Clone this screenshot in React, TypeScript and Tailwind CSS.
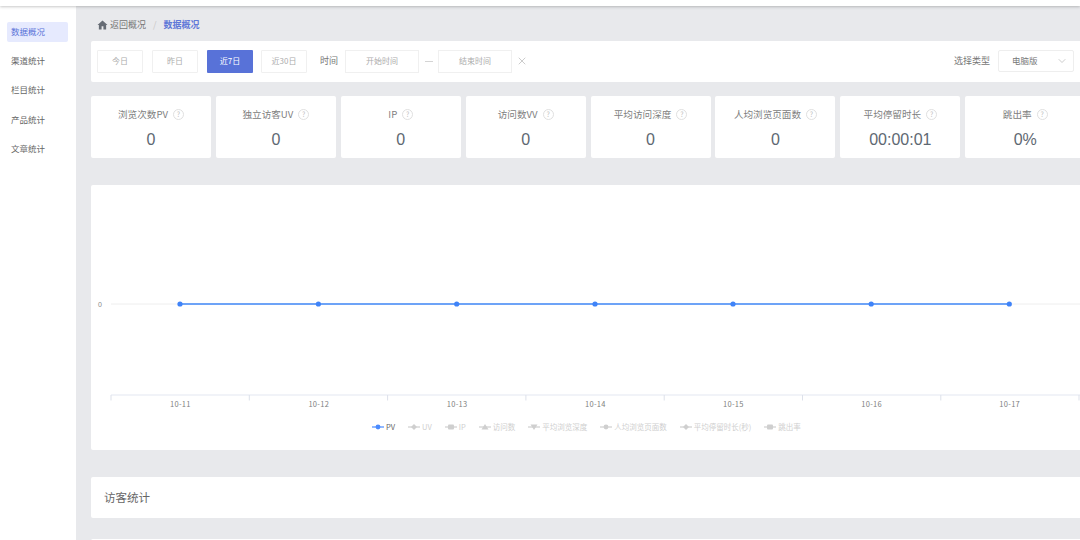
import React from "react";
import { ChevronDown, X } from "lucide-react";

const font = { fontFamily: '"Noto Sans CJK SC", "Liberation Sans", sans-serif' };

const nav = ["数据概况", "渠道统计", "栏目统计", "产品统计", "文章统计"];
const stats: [string, string][] = [
  ["浏览次数PV", "0"],
  ["独立访客UV", "0"],
  ["IP", "0"],
  ["访问数VV", "0"],
  ["平均访问深度", "0"],
  ["人均浏览页面数", "0"],
  ["平均停留时长", "00:00:01"],
  ["跳出率", "0%"],
];
const dates = ["10-11", "10-12", "10-13", "10-14", "10-15", "10-16", "10-17"];
const ticks = [111, 249.3, 387.6, 525.9, 664.2, 802.5, 940.8, 1079];
const points = [180, 318.4, 456.7, 595, 733, 871.2, 1009.3];

function Help() {
  return (
    <span className="ml-[5px] flex h-[11px] w-[11px] items-center justify-center rounded-full border border-[#e0e0e0] text-[7px] leading-none text-[#c0c0c0]">
      ?
    </span>
  );
}

function Btn({ label, active }: { label: string; active?: boolean }) {
  return (
    <button
      className={
        active
          ? "flex h-[23px] w-[46px] items-center justify-center rounded-[1px] bg-[#5872d8] text-[8px] text-white"
          : "flex h-[23px] w-[46px] items-center justify-center rounded-[1px] border border-[#f0f0f0] bg-white text-[8px] text-[#acacac]"
      }
    >
      {label}
    </button>
  );
}

function LegendIcon({ kind, color }: { kind: string; color: string }) {
  return (
    <svg width="12" height="8" viewBox="0 0 12 8" className="shrink-0">
      <line x1="0" y1="4" x2="12" y2="4" stroke={color} strokeWidth="1.2" />
      {kind === "circle" && <circle cx="6" cy="4" r="2.4" fill={color} />}
      {kind === "diamond" && <polygon points="6,1 9,4 6,7 3,4" fill={color} />}
      {kind === "square" && <rect x="3" y="1.5" width="6" height="5" rx="1" fill={color} />}
      {kind === "up" && <polygon points="6,1 9.5,6.5 2.5,6.5" fill={color} />}
      {kind === "down" && <polygon points="2.5,1.5 9.5,1.5 6,7" fill={color} />}
    </svg>
  );
}

const legend: [string, string, string, string][] = [
  ["PV", "circle", "#4a8bff", "#666666"],
  ["UV", "diamond", "#cfcfcf", "#cfcfcf"],
  ["IP", "square", "#cfcfcf", "#cfcfcf"],
  ["访问数", "up", "#cfcfcf", "#cfcfcf"],
  ["平均浏览深度", "down", "#cfcfcf", "#cfcfcf"],
  ["人均浏览页面数", "circle", "#cfcfcf", "#cfcfcf"],
  ["平均停留时长(秒)", "diamond", "#cfcfcf", "#cfcfcf"],
  ["跳出率", "square", "#cfcfcf", "#cfcfcf"],
];

export default function App() {
  return (
    <div style={font} className="flex h-[540px] w-[1080px] flex-col overflow-hidden bg-white">
      <div className="z-10 h-[6px] shrink-0 bg-white shadow-[0_1px_3px_rgba(0,0,0,0.22)]" />
      <div className="flex min-h-0 flex-1">
        <aside className="flex w-[76px] shrink-0 flex-col bg-white pl-[7px] pr-2 pt-4">
          {nav.map((n, i) => (
            <div
              key={n}
              className={
                i === 0
                  ? "mb-[9.3px] flex h-5 items-center rounded-[2px] bg-[#e6eafe] pb-[2px] pl-[4px] text-[8.5px] text-[#5872d8]"
                  : "mb-[9.3px] flex h-5 items-center pb-[2px] pl-[4px] text-[8.5px] text-[#666666]"
              }
            >
              {n}
            </div>
          ))}
        </aside>
        <main className="flex w-[1004px] shrink-0 flex-col overflow-hidden bg-[#e8e9ec] pl-[15px]">
          <div className="flex h-[35px] shrink-0 items-center pl-[6px] pt-[2px] text-[9px]">
            <svg width="11" height="10" viewBox="0 0 24 22" fill="#666c75">
              <path d="M12 1 1 11h3v10h6v-7h4v7h6V11h3z" />
            </svg>
            <span className="ml-[2px] text-[#777777]">返回概况</span>
            <span className="mx-[7px] text-[#c8c8c8]">/</span>
            <span className="font-bold text-[#6078d8]">数据概况</span>
          </div>

          <div className="flex h-[41px] w-[1000px] shrink-0 items-center rounded-l-[2px] bg-white pl-[6px] pr-[17px] pb-[1px]">
            <Btn label="今日" />
            <div className="w-[9px]" />
            <Btn label="昨日" />
            <div className="w-[9px]" />
            <Btn label="近7日" active />
            <div className="w-2" />
            <Btn label="近30日" />
            <span className="ml-[13px] text-[9px] font-normal text-[#777777]">时间</span>
            <div className="ml-[7px] flex h-[23px] w-[74px] items-center justify-center border border-[#f0f0f0] text-[8px] text-[#acacac]">
              开始时间
            </div>
            <div className="mx-[5.5px] h-px w-2 bg-[#d4d4d4]" />
            <div className="flex h-[23px] w-[74px] items-center justify-center border border-[#f0f0f0] text-[8px] text-[#acacac]">
              结束时间
            </div>
            <X className="ml-[4px] text-[#999999]" size={12} strokeWidth={1} />
            <span className="ml-auto text-[9px] text-[#777777]">选择类型</span>
            <div className="ml-2 flex h-[22px] w-[76px] items-center justify-between rounded-[2px] border border-[#eeeeee] pb-[1px] pl-[13px] pr-[5px] text-[8.5px] text-[#777777]">
              电脑版
              <ChevronDown className="text-[#999999]" size={12} strokeWidth={1} />
            </div>
          </div>

          <div className="mt-[14px] flex h-[62px] shrink-0 gap-[4.9px]">
            {stats.map(([label, value]) => (
              <div
                key={label}
                className="flex w-[120px] shrink-0 flex-col items-center rounded-[2px] bg-white pt-[11px]"
              >
                <div className="flex h-[14px] items-center text-[9.6px] text-[#808080]">
                  {label}
                  <Help />
                </div>
                <div
                  className="mt-[6.5px] text-[16px] leading-[24px] text-[#5e6872]"
                  style={{ fontFamily: '"Liberation Sans", sans-serif' }}
                >
                  {value}
                </div>
              </div>
            ))}
          </div>

          <div className="mt-[27px] flex h-[265px] w-[1000px] shrink-0 flex-col rounded-l-[2px] bg-white">
            <svg width="989" height="225" viewBox="91 185 989 225" className="shrink-0">
              <text x="98" y="306.5" fontSize="7" fill="#888888" fontFamily="Liberation Sans">0</text>
              <line x1="111" y1="304" x2="1080" y2="304" stroke="#eeeeee" />
              <line x1="180" y1="304" x2="1009" y2="304" stroke="#6da3f7" strokeWidth="2" />
              {points.map((x) => (
                <circle key={x} cx={x} cy="304" r="2.6" fill="#3f83f8" />
              ))}
              <line x1="111" y1="395" x2="1080" y2="395" stroke="#e4e8f2" strokeWidth="1.2" />
              {ticks.map((x) => (
                <line key={x} x1={x} y1="395" x2={x} y2="400.5" stroke="#dde1ea" />
              ))}
              {dates.map((d, i) => (
                <text
                  key={d}
                  x={points[i] + 0.4}
                  y="407"
                  fontSize="7.5"
                  letterSpacing="0.3"
                  textAnchor="middle"
                  fill="#808080"
                  fontFamily="Noto Sans CJK SC"
                >
                  {d}
                </text>
              ))}
            </svg>
            <div className="ml-[281px] mt-[11px] flex h-[12px] items-center gap-[13px]">
              {legend.map(([label, kind, color, text]) => (
                <div key={label} className="flex items-center gap-[2px] text-[7.5px]" style={{ color: text }}>
                  <LegendIcon kind={kind} color={color} />
                  {label}
                </div>
              ))}
            </div>
          </div>

          <div className="mt-[27px] flex h-[41px] w-[1000px] shrink-0 items-center rounded-l-[2px] bg-white pl-[13px] text-[11.5px] text-[#666666]">
            访客统计
          </div>
          <div className="mt-[21px] h-[20px] w-[1000px] shrink-0 rounded-l-[2px] bg-white" />
        </main>
      </div>
    </div>
  );
}
